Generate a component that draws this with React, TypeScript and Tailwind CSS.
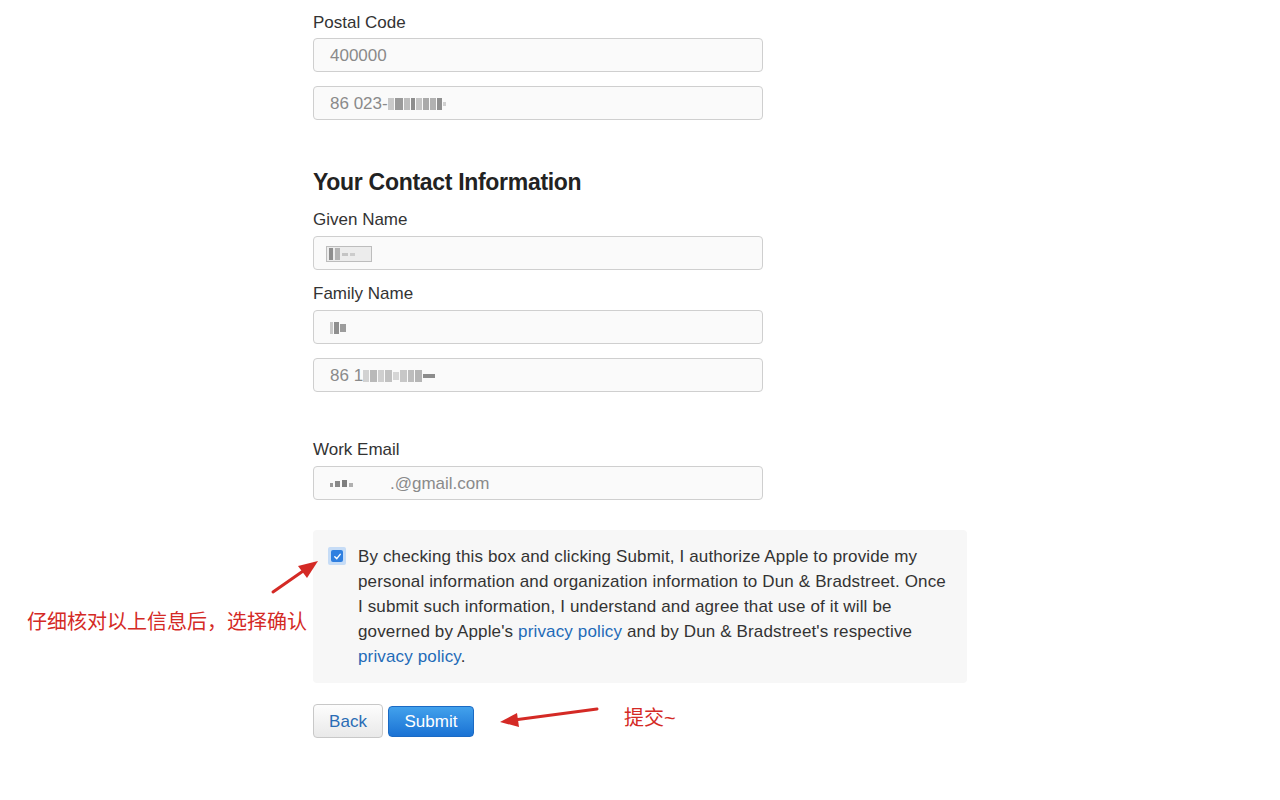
import React from 'react';

const font = { fontFamily: '"Liberation Sans", Arial, "Noto Sans CJK SC", sans-serif' };

// blurred (mosaic) personal data
const Mosaic = ({ cells }: { cells: string[] }) => (
  <span className="inline-flex items-center gap-[1px] align-middle">
    {cells.map((c, i) => (
      <span key={i} className={`inline-block ${c}`} />
    ))}
  </span>
);

const Field = ({ children }: { children: React.ReactNode }) => (
  <div className="flex h-[34px] w-[450px] items-center rounded-[4px] border border-[#cfcfcf] bg-[#fafafa] pl-4 pt-[2px] text-[17px] text-[#8a8a8a]">
    {children}
  </div>
);

const Label = ({ children }: { children: React.ReactNode }) => (
  <div className="h-5 text-[17px] leading-5 text-[#333]">{children}</div>
);

export default function App() {
  return (
    <div className="relative min-h-[800px] w-[1280px] bg-white" style={font}>
      <div className="flex flex-col pl-[313px] pt-[13px]">
        <Label>Postal Code</Label>
        <div className="mt-[5px]">
          <Field>400000</Field>
        </div>
        <div className="mt-[14px]">
          <Field>
            86 023-
            <Mosaic cells={['h-3 w-[6px] bg-[#c9c9c9]', 'h-3 w-2 bg-[#9a9a9a]', 'h-3 w-[6px] bg-[#bdbdbd]', 'h-3 w-[4px] bg-[#8d8d8d]', 'h-3 w-[6px] bg-[#c4c4c4]', 'h-3 w-[6px] bg-[#aaaaaa]', 'h-3 w-[6px] bg-[#b2b2b2]', 'h-3 w-[5px] bg-[#909090]', 'h-1 w-[3px] bg-[#d0d0d0]']} />
          </Field>
        </div>

        <h2 className="mt-12 h-7 text-[23px] font-bold leading-7 tracking-[-0.3px] text-[#222]">Your Contact Information</h2>

        <div className="mt-[14px]">
          <Label>Given Name</Label>
        </div>
        <div className="mt-[6px]">
          <Field>
            <span className="-ml-[4px] inline-flex h-[16px] w-[46px] items-center gap-[2px] border border-[#bdbdbd] bg-[#ececec] px-[2px]">
              <span className="h-3 w-[4px] bg-[#8e8e8e]" />
              <span className="h-3 w-[5px] bg-[#b4b4b4]" />
              <span className="h-[3px] w-[6px] bg-[#c4c4c4]" />
              <span className="h-[3px] w-[5px] bg-[#cccccc]" />
            </span>
          </Field>
        </div>

        <div className="mt-[14px]">
          <Label>Family Name</Label>
        </div>
        <div className="mt-[6px]">
          <Field>
            <Mosaic cells={['h-3 w-[3px] bg-[#c8c8c8]', 'h-3 w-[5px] bg-[#8f8f8f]', 'h-2 w-[6px] bg-[#9c9c9c]']} />
          </Field>
        </div>
        <div className="mt-[14px]">
          <Field>
            86 1
            <Mosaic cells={['h-3 w-[6px] bg-[#d2d2d2]', 'h-3 w-[7px] bg-[#b9b9b9]', 'h-3 w-[6px] bg-[#cfcfcf]', 'h-3 w-[7px] bg-[#c1c1c1]', 'h-2 w-[6px] bg-[#d6d6d6]', 'h-3 w-[7px] bg-[#c7c7c7]', 'h-3 w-[6px] bg-[#bdbdbd]', 'h-3 w-[7px] bg-[#b5b5b5]', 'h-[4px] w-[12px] bg-[#8c8c8c]']} />
          </Field>
        </div>

        <div className="mt-12">
          <Label>Work Email</Label>
        </div>
        <div className="mt-[6px]">
          <Field>
            <span className="inline-flex w-[60px] items-end gap-[2px] pb-[2px]">
              <span className="h-[4px] w-[3px] bg-[#999]" />
              <span className="h-[6px] w-[5px] bg-[#888]" />
              <span className="h-[7px] w-[5px] bg-[#7f7f7f]" />
              <span className="h-[4px] w-[4px] bg-[#b0b0b0]" />
            </span>
            .@gmail.com
          </Field>
        </div>

        <div className="mt-[30px] flex w-[654px] gap-[12px] rounded-[4px] bg-[#f7f7f7] pb-[14px] pl-[15px] pr-3 pt-[14px]">
          <div className="mt-[3px] flex h-[18px] w-[18px] shrink-0 items-center justify-center rounded-[2px] bg-[#c6dcf6]">
            <div className="flex h-3 w-3 items-center justify-center rounded-[2px] bg-[#2f7fe0]">
              <svg width="9" height="9" viewBox="0 0 10 10" fill="none" stroke="white" strokeWidth="1.6" strokeLinecap="round" strokeLinejoin="round">
                <path d="M2 5.2 L4.2 7.4 L8 2.6" />
              </svg>
            </div>
          </div>
          <p className="w-[600px] text-[17px] leading-[25px] tracking-[0.14px] text-[#333]">
            By checking this box and clicking Submit, I authorize Apple to provide my
            <br />
            personal information and organization information to Dun &amp; Bradstreet. Once
            <br />
            I submit such information, I understand and agree that use of it will be
            <br />
            governed by Apple's <span className="text-[#1f6bb8]">privacy policy</span> and by Dun &amp; Bradstreet's respective
            <br />
            <span className="text-[#1f6bb8]">privacy policy</span>.
          </p>
        </div>

        <div className="mt-[21px] flex items-center gap-[5px]">
          <button className="h-[34px] w-[70px] rounded-[4px] border border-[#c8c8c8] bg-gradient-to-b from-[#fdfdfd] to-[#e9e9e9] pt-[2px] text-[17px] text-[#2a6cb5]">
            Back
          </button>
          <button className="h-[31px] w-[86px] rounded-[4px] border border-[#1b6ac4] bg-gradient-to-b from-[#42a1ec] to-[#1a72d4] pt-[2px] text-[17px] text-white">
            Submit
          </button>
        </div>
      </div>

      {/* annotations */}
      <svg className="pointer-events-none absolute left-0 top-0" width="1280" height="800">
        <line x1="273" y1="592" x2="306" y2="569" stroke="#d42a25" strokeWidth="3" strokeLinecap="round" />
        <polygon points="318,561 298,566 307,578" fill="#d42a25" />
        <line x1="597" y1="709" x2="514" y2="720" stroke="#d42a25" strokeWidth="3" strokeLinecap="round" />
        <polygon points="500,722 517,713 519,727" fill="#d42a25" />
      </svg>
      <div className="absolute left-[27px] top-[609px] text-[20px] leading-[26px] text-[#d42a25]">仔细核对以上信息后，选择确认</div>
      <div className="absolute left-[624px] top-[705px] text-[20px] leading-[26px] text-[#d42a25]">提交~</div>
    </div>
  );
}
